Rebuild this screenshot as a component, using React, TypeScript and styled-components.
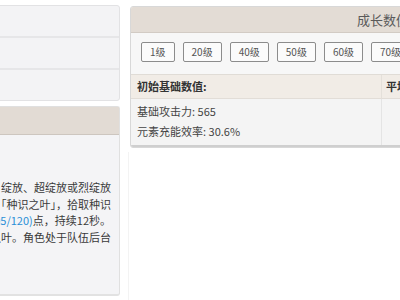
import React from 'react';
import styled, { createGlobalStyle } from 'styled-components';

const GlobalStyle = createGlobalStyle`
  html, body {
    margin: 0;
    padding: 0;
    background: #ffffff;
  }
  body {
    font-family: "Noto Sans CJK SC", "Noto Sans", sans-serif;
    color: #444;
  }
`;

const levels = ['1级', '20级', '40级', '50级', '60级', '70级', '80级'];

const passiveLines = [
  '触发燃烧、原激化、超激化、蔓激化、绽放、超绽放或烈绽放',
  '后，将在角色周围产生「种识之叶」，拾取种识',
];

export default function App() {
  return (
    <>
      <GlobalStyle />
      <Page>
        <LeftColumn>
          <InfoBox>
            <InfoRow />
            <InfoRow />
            <InfoRow $last />
          </InfoBox>
          <PassiveBox>
            <PassiveHeader>武器技能</PassiveHeader>
            <PassiveBody>
              {passiveLines.map((line) => (
                <Line key={line}>{line}</Line>
              ))}
              <Line>
                之叶的角色元素精通提升60<Blue>(/75/90/105/120)</Blue>点，持续12秒。
              </Line>
              <Line>每20秒至多通过这种方式产生一枚种识之叶。角色处于队伍后台</Line>
            </PassiveBody>
          </PassiveBox>
        </LeftColumn>
        <RightColumn>
          <StatsPanel>
            <PanelTitle>成长数值</PanelTitle>
            <LevelBar>
              {levels.map((lv) => (
                <LevelButton key={lv}>{lv}</LevelButton>
              ))}
            </LevelBar>
            <StatTable>
              <HeadCell>初始基础数值:</HeadCell>
              <HeadCell $side>平均值</HeadCell>
              <BodyCell>
                <StatLine>基础攻击力: 565</StatLine>
                <StatLine>元素充能效率: 30.6%</StatLine>
              </BodyCell>
              <BodyCell $side />
            </StatTable>
          </StatsPanel>
          <GhostPanel />
        </RightColumn>
      </Page>
    </>
  );
}

const Page = styled.div`
  width: 400px;
  height: 300px;
  overflow: hidden;
  display: flex;
  gap: 10px;
  padding-top: 5px;
  box-sizing: border-box;
`;

const LeftColumn = styled.div`
  flex: 0 0 340px;
  min-width: 0;
  margin-left: -220px;
  display: flex;
  flex-direction: column;
  gap: 5px;
`;

const InfoBox = styled.div`
  background: #f3f3f5;
  border: 1px solid #e2e2e4;
  border-radius: 3px;
  display: flex;
  flex-direction: column;
`;

const InfoRow = styled.div<{ $last?: boolean }>`
  height: 30px;
  border-bottom: ${({ $last }) => ($last ? 'none' : '2px solid #e6e6e8')};
`;

const PassiveBox = styled.div`
  height: 187px;
  background: #f4f4f6;
  border: 1px solid #e0e0e0;
  border-bottom: 2px solid #e2e2e2;
  border-radius: 3px;
  display: flex;
  flex-direction: column;
`;

const PassiveHeader = styled.div`
  height: 27px;
  background: #e2dbd4;
  border-bottom: 1px solid #cdc6bf;
  font-size: 13px;
  line-height: 27px;
  padding-left: 12px;
  color: #555;
`;

const PassiveBody = styled.div`
  padding: 44px 8px 0 0;
  display: flex;
  flex-direction: column;
  align-items: flex-end;
`;

const Line = styled.div`
  font-size: 11px;
  line-height: 16.5px;
  white-space: nowrap;
  color: #3a3a3a;
`;

const Blue = styled.span`
  color: #2a8fd6;
`;

const RightColumn = styled.div`
  flex: 0 0 290px;
  min-width: 0;
  display: flex;
  flex-direction: column;
  gap: 4px;
`;

const StatsPanel = styled.div`
  margin-top: 1px;
  background: #f7f7f7;
  border: 1px solid #d8d8d8;
  border-radius: 3px;
  overflow: hidden;
  display: flex;
  flex-direction: column;
`;

const PanelTitle = styled.div`
  height: 25px;
  background: #e3dcd5;
  border-bottom: 1px solid #d2cbc4;
  text-align: right;
  padding-right: 10px;
  font-size: 13px;
  line-height: 25px;
  color: #5a5a5a;
`;

const LevelBar = styled.div`
  display: flex;
  gap: 8px;
  padding: 9px 0 12px 10px;
  white-space: nowrap;
  overflow: hidden;
`;

const LevelButton = styled.div`
  flex: none;
  height: 18px;
  padding: 0 8px;
  border: 1px solid #8c8c8c;
  border-radius: 2px;
  background: #fbfbfb;
  font-size: 10px;
  line-height: 18px;
  color: #555;
`;

const StatTable = styled.div`
  display: grid;
  grid-template-columns: 250px 1fr;
  border-top: 1px solid #e0dcd6;
  border-bottom: 2px solid #cfcfcf;
`;

const HeadCell = styled.div<{ $side?: boolean }>`
  height: 23px;
  background: #f1ece6;
  border-bottom: 1px solid #e2ddd7;
  border-left: ${({ $side }) => ($side ? '1px solid #e4e0da' : 'none')};
  padding-left: ${({ $side }) => ($side ? '4px' : '6px')};
  font-size: 11px;
  font-weight: bold;
  line-height: 23px;
  color: #333;
  white-space: nowrap;
`;

const BodyCell = styled.div<{ $side?: boolean }>`
  background: #f4f4f4;
  border-left: ${({ $side }) => ($side ? '1px solid #e4e4e4' : 'none')};
  padding: 2px 0 4px 6px;
  display: flex;
  flex-direction: column;
`;

const StatLine = styled.div`
  font-size: 11px;
  line-height: 20px;
  color: #444;
  white-space: nowrap;
`;

const GhostPanel = styled.div`
  flex: 1;
  border-left: 1px solid #f3f3f3;
  margin-left: -2px;
`;
